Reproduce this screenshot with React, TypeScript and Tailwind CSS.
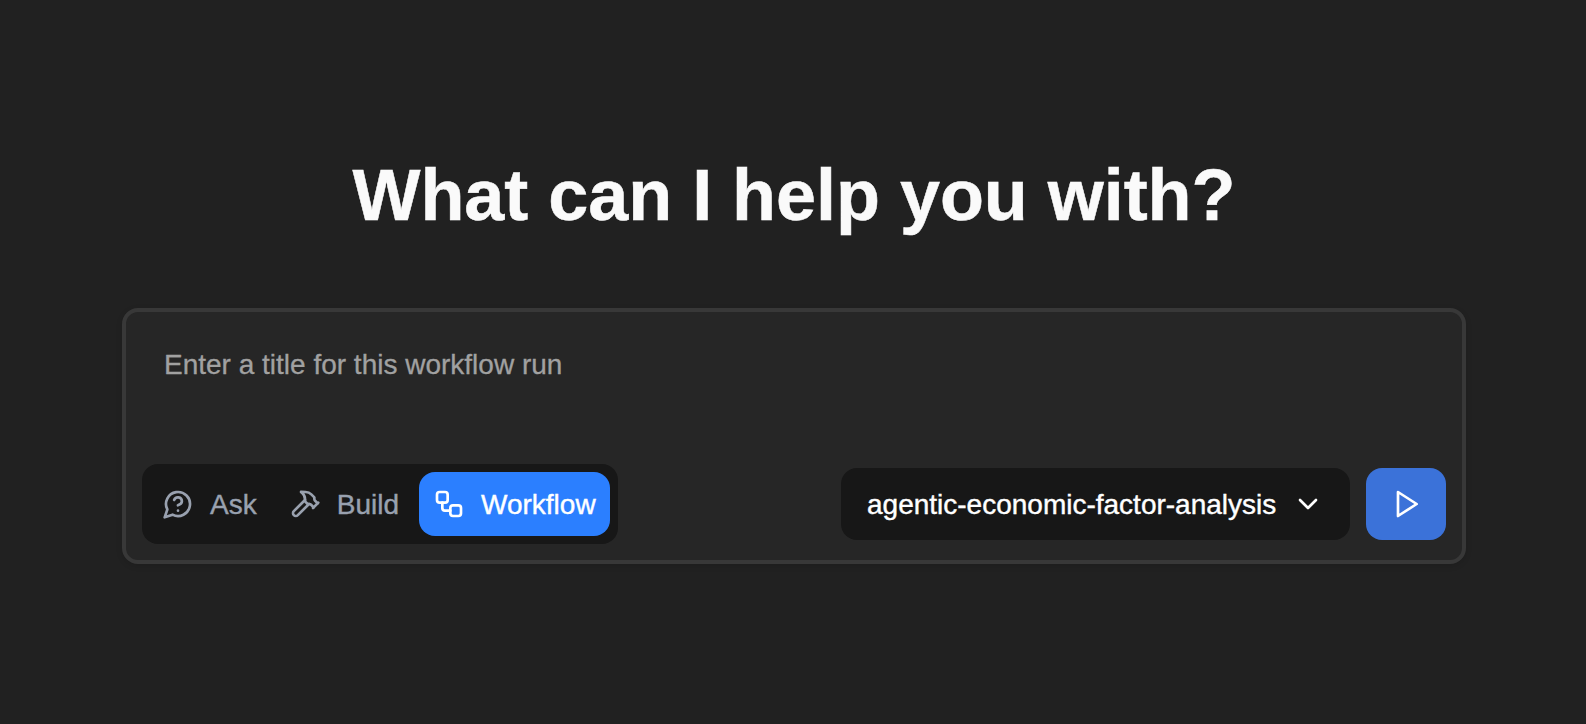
import React from 'react';
import { ChevronDown } from 'lucide-react';

const modes = [
    { id: 'ask', label: 'Ask' },
    { id: 'build', label: 'Build' },
    { id: 'workflow', label: 'Workflow' },
];

function Icon({ name }: { name: string }) {
    return (
        <svg
            className="size-8 shrink-0"
            viewBox="0 0 24 24"
            fill="none"
            stroke="currentColor"
            strokeWidth={2}
            strokeLinecap="round"
            strokeLinejoin="round"
        >
            {name === 'ask' && (
                <>
                    <path d="M7.9 20A9 9 0 1 0 4 16.1L2 22Z" />
                    <path d="M9.09 9a3 3 0 0 1 5.83 1c0 2-3 3-3 3" />
                    <path d="M12 17h.01" />
                </>
            )}
            {name === 'build' && (
                <>
                    <path d="m15 12-8.373 8.373a1 1 0 1 1-3-3L12 9" />
                    <path d="m18 15 4-4" />
                    <path d="m21.5 11.5-1.914-1.914A2 2 0 0 1 19 8.172V7l-2.26-2.26a6 6 0 0 0-4.202-1.756L9 2.96l.92.82A6.18 6.18 0 0 1 12 8.4V10l2 2h1.172a2 2 0 0 1 1.414.586L18.5 14.5" />
                </>
            )}
            {name === 'workflow' && (
                <>
                    <rect width="8" height="8" x="3" y="3" rx="2" />
                    <path d="M7 11v4a2 2 0 0 0 2 2h4" />
                    <rect width="8" height="8" x="13" y="13" rx="2" />
                </>
            )}
            {name === 'play' && <polygon points="6 3 20 12 6 21 6 3" />}
        </svg>
    );
}

export default function App() {
    const mode = 'workflow';

    return (
        <div className="flex h-[724px] w-full flex-col items-center bg-[#212121] pt-[159px] font-['Liberation_Sans',Arial,sans-serif]">
            <h1 className="ml-[2px] text-[72px] leading-[72px] font-bold tracking-[-0.04px] whitespace-nowrap text-[#fafafa] [-webkit-text-stroke:0.5px_currentColor]">
                What can I help you with?
            </h1>

            <div className="mt-[77px] mr-[-2px] flex h-[256px] w-[1344px] flex-col justify-between rounded-[16px] border-4 border-[#383838] bg-[#262626] px-4 pt-[33px] pb-4 shadow-[0_2px_6px_rgba(0,0,0,0.12)]">
                {/* Prompt */}
                <div className="pl-[22px] text-[28px] leading-10 text-[#a1a1a1] [-webkit-text-stroke:0.3px_currentColor]">
                    Enter a title for this workflow run
                </div>

                <div className="flex items-center justify-between">
                    {/* Mode switch */}
                    <div className="flex h-20 w-[476px] items-center justify-between rounded-[16px] bg-[#171717] p-2">
                        {modes.map((m) => (
                            <button
                                key={m.id}
                                type="button"
                                className={`flex h-16 items-center gap-4 rounded-[16px] text-[28px] whitespace-nowrap [-webkit-text-stroke:0.4px_currentColor] ${m.id === mode ? 'w-[191px] bg-[#2b7fff] pl-[14px] text-white' : 'pl-3 text-[#99a1af]'}`}
                            >
                                <Icon name={m.id} />
                                <span className="pt-0.5">{m.label}</span>
                            </button>
                        ))}
                    </div>

                    {/* Workflow picker */}
                    <div className="flex gap-4">
                        <button
                            type="button"
                            className="flex h-[72px] w-[509px] items-center justify-between rounded-[16px] bg-[#171717] px-[26px] text-[28px] whitespace-nowrap text-white [-webkit-text-stroke:0.4px_currentColor]"
                        >
                            <span className="pt-0.5">agentic-economic-factor-analysis</span>
                            <ChevronDown size={32} strokeWidth={2} />
                        </button>
                        <button
                            type="button"
                            className="flex h-[72px] w-20 items-center justify-center rounded-[16px] bg-[#3b72d9] text-white"
                        >
                            <Icon name="play" />
                        </button>
                    </div>
                </div>
            </div>
        </div>
    );
}
